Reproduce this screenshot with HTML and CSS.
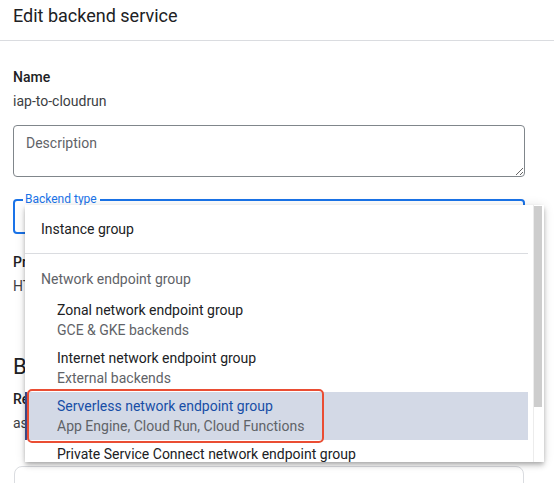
FILE: index.html
```html
<!DOCTYPE html>
<html lang="en">
<head>
<meta charset="utf-8">
<title>Edit backend service</title>
<link rel="stylesheet" href="styles.css">
</head>
<body>
<header class="page-header">
  <h1 class="page-title">Edit backend service</h1>
</header>
<main class="content">
  <div class="field-label">Name</div>
  <div class="field-value">iap-to-cloudrun</div>

  <textarea class="desc" placeholder="Description"></textarea>

  <div class="select-field">
    <span class="float-label">Backend type</span>
  </div>

  <div class="field-label spaced">Protocol</div>
  <div class="field-value">HTTPS</div>

  <h2 class="section-title">Backends</h2>
  <div class="field-label">Region</div>
  <div class="field-value">asia-northeast1</div>

  <div class="card"></div>

  <div class="menu">
    <div class="menu-list">
      <div class="opt single">Instance group</div>
      <div class="sep"></div>
      <div class="group-label">Network endpoint group</div>
      <div class="opt two">
        <div class="opt-title">Zonal network endpoint group</div>
        <div class="opt-sub">GCE &amp; GKE backends</div>
      </div>
      <div class="opt two">
        <div class="opt-title">Internet network endpoint group</div>
        <div class="opt-sub">External backends</div>
      </div>
      <div class="opt two selected">
        <div class="opt-title">Serverless network endpoint group</div>
        <div class="opt-sub">App Engine, Cloud Run, Cloud Functions</div>
      </div>
      <div class="opt two">
        <div class="opt-title">Private Service Connect network endpoint group</div>
        <div class="opt-sub">Published services</div>
      </div>
    </div>
    <div class="scrollbar"><div class="thumb"></div></div>
    <div class="annotation"></div>
  </div>
</main>
</body>
</html>
```

FILE: styles.css
```css
* { box-sizing: border-box; }

html, body {
  margin: 0;
  padding: 0;
  background: #ffffff;
  font-family: Roboto, "Liberation Sans", Arial, sans-serif;
  color: #202124;
  overflow: hidden;
}

.page-header {
  height: 41px;
  border-bottom: 1px solid #dadce0;
  padding: 4px 13px 0;
}

.page-title {
  margin: 0;
  font-size: 18px;
  line-height: 24px;
  font-weight: 400;
  color: #202124;
}

.content {
  position: relative;
  padding: 24px 29px 0 13px;
}

.field-label {
  font-size: 14px;
  line-height: 24px;
  font-weight: 500;
  color: #202124;
}

.field-label.spaced {
  margin-top: 16px;
}

.field-value {
  font-size: 14px;
  line-height: 24px;
  color: #3c4043;
}

.desc {
  display: block;
  margin-top: 12px;
  width: 512px;
  height: 52px;
  padding: 7px 12px;
  border: 1px solid #80868b;
  border-radius: 4px;
  font-family: Roboto, "Liberation Sans", Arial, sans-serif;
  font-size: 14px;
  line-height: 20px;
  color: #202124;
  outline: none;
}

.desc::placeholder {
  color: #5f6368;
}

.select-field {
  position: relative;
  margin-top: 22px;
  width: 512px;
  height: 35px;
  border: 2px solid #1a73e8;
  border-radius: 4px;
}

.float-label {
  position: absolute;
  left: 8px;
  top: -10px;
  padding: 0 3px 0 2px;
  background: #ffffff;
  font-size: 12px;
  line-height: 16px;
  color: #1a73e8;
}

.section-title {
  margin: 55px 0 6px;
  font-size: 22px;
  line-height: 28px;
  font-weight: 400;
  color: #202124;
}

.card {
  margin-top: 31px;
  width: 510px;
  height: 60px;
  margin-left: 1px;
  border: 1px solid #dadce0;
  border-radius: 8px;
}

/* dropdown overlay */
.menu {
  position: absolute;
  left: 25px;
  top: 164px;
  width: 519px;
  height: 257px;
  display: flex;
  background: #ffffff;
  box-shadow: 0 2px 4px -1px rgba(0,0,0,.2), 0 4px 5px 0 rgba(0,0,0,.14), 0 1px 10px 0 rgba(0,0,0,.12);
}

.menu-list {
  width: 503px;
  overflow: hidden;
  font-size: 14px;
  line-height: 20px;
}

.opt.single {
  height: 48px;
  display: flex;
  align-items: center;
  padding-left: 16px;
  color: #202124;
}

.sep {
  height: 1px;
  background: #dadce0;
}

.group-label {
  padding: 15px 16px 7px;
  color: #5f6368;
}

.opt.two {
  height: 48px;
  padding: 4px 16px 4px 32px;
  white-space: nowrap;
}

.opt-title {
  color: #202124;
}

.opt-sub {
  color: #5f6368;
}

.opt.selected {
  background: #d3d9e6;
  border-left: 2px solid #3a4784;
  padding-left: 30px;
}

.opt.selected .opt-title {
  color: #174ea6;
}

.scrollbar {
  margin-left: 5px;
  width: 11px;
  border-left: 1px solid #ececec;
  padding: 1px 2px 0 0;
}

.thumb {
  width: 8px;
  height: 201px;
  background: #cdcdcd;
}

.annotation {
  position: absolute;
  left: 2px;
  top: 184px;
  width: 297px;
  height: 54px;
  border: 2px solid #ea4d33;
  border-radius: 5px;
}
```
